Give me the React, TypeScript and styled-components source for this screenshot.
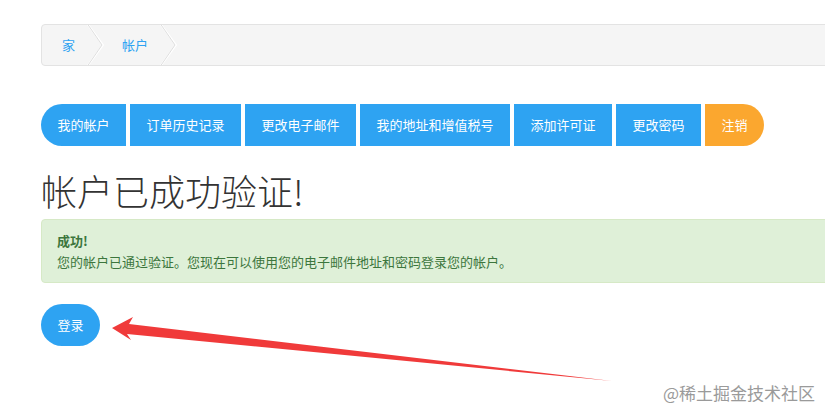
import React from "react";
import styled, { createGlobalStyle } from "styled-components";

const GlobalStyle = createGlobalStyle`
	html, body {
		margin: 0;
		padding: 0;
		background: #fff;
		overflow: hidden;
	}
	body {
		font-family: "Noto Sans CJK SC", "Open Sans", sans-serif;
		color: #333;
	}
`;

const navItems = [
	"我的帐户",
	"订单历史记录",
	"更改电子邮件",
	"我的地址和增值税号",
	"添加许可证",
	"更改密码",
];

const App = () => {
	return (
		<Page>
			<GlobalStyle />
			<Content>
				<Breadcrumb>
					<Crumb>家</Crumb>
					<Chevron />
					<Crumb>帐户</Crumb>
					<Chevron />
				</Breadcrumb>

				<Nav>
					{navItems.map((label, i) => (
						<NavButton key={label} $first={i === 0}>
							{label}
						</NavButton>
					))}
					<NavButton $variant="orange" $last>
						注销
					</NavButton>
				</Nav>

				<Title>帐户已成功验证!</Title>

				<Alert>
					<AlertTitle>成功!</AlertTitle>
					<AlertText>您的帐户已通过验证。您现在可以使用您的电子邮件地址和密码登录您的帐户。</AlertText>
				</Alert>

				<LoginButton>登录</LoginButton>
			</Content>

			<Arrow />
			<Watermark>@稀土掘金技术社区</Watermark>
		</Page>
	);
};

const Chevron = () => (
	<ChevronSvg viewBox="0 0 17 42" width="17" height="42">
		<polyline points="0.5,0 16,21 0.5,42" fill="none" stroke="#fff" strokeWidth="2" />
		<polyline points="0.5,0 15,21 0.5,42" fill="none" stroke="#dedede" strokeWidth="1" />
	</ChevronSvg>
);

const Arrow = () => (
	<ArrowSvg viewBox="0 0 825 413" width="825" height="413">
		<polygon
			points="112,328 133,317 129,324 612,381 127,334 131,340"
			fill="#f03a3a"
		/>
	</ArrowSvg>
);

const Page = styled.div`
	position: relative;
	width: 825px;
	height: 413px;
	overflow: hidden;
`;

const Content = styled.div`
	display: flex;
	flex-direction: column;
	align-items: flex-start;
	padding: 24px 0 0 41px;
	width: 1000px;
`;

const Breadcrumb = styled.div`
	display: flex;
	align-items: center;
	box-sizing: border-box;
	width: 100%;
	height: 42px;
	padding-left: 20px;
	background: #f5f5f5;
	border: 1px solid #e3e3e3;
	border-radius: 4px;
	overflow: hidden;
`;

const Crumb = styled.span`
	font-size: 13px;
	color: #2ea3f2;
	line-height: 40px;
`;

const ChevronSvg = styled.svg`
	display: block;
	margin: 0 18px 0 12px;
	flex: none;
`;

const Nav = styled.div`
	display: flex;
	gap: 4px;
	margin-top: 38px;
`;

const NavButton = styled.div<{ $variant?: "blue" | "orange"; $first?: boolean; $last?: boolean }>`
	height: 42px;
	line-height: 42px;
	padding: 0 16.5px;
	font-size: 13px;
	color: #fff;
	white-space: nowrap;
	background: ${(p) => (p.$variant === "orange" ? "#fba72f" : "#2ea3f2")};
	border-radius: ${(p) => (p.$first ? "21px 0 0 21px" : p.$last ? "0 21px 21px 0" : "0")};
`;

const Title = styled.h1`
	margin: 22px 0 7px;
	font-size: 36px;
	font-weight: 300;
	line-height: 44px;
	color: #333;
`;

const Alert = styled.div`
	box-sizing: border-box;
	width: 100%;
	padding: 10px 15px;
	background: #dff0d8;
	border: 1px solid #d6e9c6;
	border-radius: 4px;
	color: #3c763d;
	font-size: 13px;
	line-height: 21px;
`;

const AlertTitle = styled.div`
	font-weight: 700;
`;

const AlertText = styled.div``;

const LoginButton = styled.div`
	margin-top: 21px;
	height: 42px;
	line-height: 42px;
	padding: 0 16.5px;
	border-radius: 21px;
	background: #2ea3f2;
	color: #fff;
	font-size: 13px;
`;

const ArrowSvg = styled.svg`
	position: absolute;
	left: 0;
	top: 0;
	pointer-events: none;
`;

const Watermark = styled.div`
	position: absolute;
	right: 10px;
	bottom: 8px;
	font-size: 17px;
	color: #9a9a9a;
	text-shadow: 0 0 2px #fff;
`;

export default App;
